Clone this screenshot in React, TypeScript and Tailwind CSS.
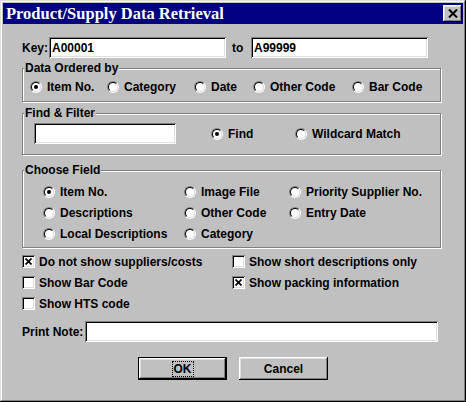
import React from "react";

const sunken =
  "bg-white shadow-[inset_1px_1px_0_#808080,inset_-1px_-1px_0_#fff,inset_2px_2px_0_#000,inset_-2px_-2px_0_#dfdfdf]";
const raised =
  "shadow-[inset_-1px_-1px_0_#000,inset_1px_1px_0_#fff,inset_-2px_-2px_0_#808080,inset_2px_2px_0_#dfdfdf]";

const Radio = ({ checked = false }: { checked?: boolean }) => (
  <span className="block w-[12px] h-[12px] shrink-0 rounded-full border border-t-[#808080] border-l-[#808080] border-r-white border-b-white">
    <span className="flex items-center justify-center w-full h-full rounded-full border border-t-black border-l-black border-r-[#dfdfdf] border-b-[#dfdfdf] bg-white">
      {checked && <span className="block w-[4px] h-[4px] rounded-full bg-black" />}
    </span>
  </span>
);

const Check = ({ checked = false }: { checked?: boolean }) => (
  <span className={`flex items-center justify-center w-[13px] h-[13px] shrink-0 ${sunken}`}>
    {checked && (
      <svg width="7" height="7" viewBox="0 0 7 7">
        <path d="M0.5 0.5L6.5 6.5M6.5 0.5L0.5 6.5" stroke="black" strokeWidth="1.7" />
      </svg>
    )}
  </span>
);

const RadioItem = ({ label, checked, w }: { label: string; checked?: boolean; w?: string }) => (
  <div className={`flex items-center gap-[5px] ${w ?? ""}`}>
    <Radio checked={checked} />
    <span>{label}</span>
  </div>
);

const CheckItem = ({ label, checked }: { label: string; checked?: boolean }) => (
  <div className="flex items-center gap-[4px] h-[21px]">
    <Check checked={checked} />
    <span>{label}</span>
  </div>
);

const Group = ({ title, h, children }: { title: string; h: string; children: React.ReactNode }) => (
  <div
    className={`relative w-[419px] ${h} border border-[#808080] shadow-[inset_1px_1px_0_#fff,1px_1px_0_#fff]`}
  >
    <span className="absolute left-[1px] top-[-8px] px-[1px] bg-[#c0c0c0] leading-[14px]">{title}</span>
    {children}
  </div>
);

export default function App() {
  return (
    <div
      className={`w-[466px] h-[402px] p-[3px] bg-[#c0c0c0] text-black font-bold text-[12px] leading-[14px] font-['Liberation_Sans',Arial,sans-serif] shadow-[inset_-1px_-1px_0_#000,inset_1px_1px_0_#dfdfdf,inset_-2px_-2px_0_#808080,inset_2px_2px_0_#fff]`}
    >
      {/* title bar */}
      <div className="flex items-center justify-between h-[21px] bg-[#000080] pl-[3px] pr-[1px]">
        <span className="text-white text-[16.5px] leading-[21px] font-['Liberation_Serif','Times_New_Roman',serif]">
          Product/Supply Data Retrieval
        </span>
        <div className={`flex items-center justify-center w-[19px] h-[17px] bg-[#c0c0c0] ${raised}`}>
          <svg width="10" height="9" viewBox="0 0 10 9">
            <path d="M1 0.5L9 8.5M9 0.5L1 8.5" stroke="black" strokeWidth="2" />
          </svg>
        </div>
      </div>

      <div className="flex flex-col px-[19px]">
        {/* key range */}
        <div className="flex items-center mt-[13px] h-[21px]">
          <span className="w-[27px]">Key:</span>
          <div className={`flex items-center w-[177px] h-[21px] pl-[3px] ${sunken}`}>A00001</div>
          <span className="w-[25px] pl-[6px]">to</span>
          <div className={`flex items-center w-[177px] h-[21px] pl-[3px] ${sunken}`}>A99999</div>
        </div>

        <div className="mt-[10px]">
          <Group title="Data Ordered by" h="h-[34px]">
            <div className="flex items-center h-[20px] mt-[8px] pl-[7px]">
              <RadioItem label="Item No." checked w="w-[77px]" />
              <RadioItem label="Category" w="w-[87px]" />
              <RadioItem label="Date" w="w-[59px]" />
              <RadioItem label="Other Code" w="w-[99px]" />
              <RadioItem label="Bar Code" />
            </div>
          </Group>
        </div>

        <div className="mt-[11px]">
          <Group title="Find & Filter" h="h-[42px]">
            <div className="flex items-center mt-[9px] pl-[11px]">
              <div className={`w-[142px] h-[21px] ${sunken}`} />
              <div className="ml-[35px]">
                <RadioItem label="Find" checked w="w-[84px]" />
              </div>
              <RadioItem label="Wildcard Match" />
            </div>
          </Group>
        </div>

        <div className="mt-[15px]">
          <Group title="Choose Field" h="h-[78px]">
            <div className="grid grid-cols-[141px_105px_1fr] auto-rows-[21px] items-center mt-[10px] pl-[20px]">
              <RadioItem label="Item No." checked />
              <RadioItem label="Image File" />
              <RadioItem label="Priority Supplier No." />
              <RadioItem label="Descriptions" />
              <RadioItem label="Other Code" />
              <RadioItem label="Entry Date" />
              <RadioItem label="Local Descriptions" />
              <RadioItem label="Category" />
            </div>
          </Group>
        </div>

        {/* options */}
        <div className="grid grid-cols-[210px_1fr] mt-[3px]">
          <CheckItem label="Do not show suppliers/costs" checked />
          <CheckItem label="Show short descriptions only" />
          <CheckItem label="Show Bar Code" />
          <CheckItem label="Show packing information" checked />
          <CheckItem label="Show HTS code" />
        </div>

        <div className="flex items-center mt-[7px] h-[21px]">
          <span className="w-[63px]">Print Note:</span>
          <div className={`w-[353px] h-[21px] ${sunken}`} />
        </div>

        <div className="flex justify-center gap-[12px] mt-[15px]">
          <button className="w-[89px] h-[23px] border border-black bg-[#c0c0c0] p-0">
            <div className={`flex items-center justify-center w-full h-full ${raised}`}>
              <span className="px-[1px] outline outline-1 outline-dotted outline-black">OK</span>
            </div>
          </button>
          <button className={`flex items-center justify-center w-[89px] h-[23px] bg-[#c0c0c0] ${raised}`}>
            Cancel
          </button>
        </div>
      </div>
    </div>
  );
}
